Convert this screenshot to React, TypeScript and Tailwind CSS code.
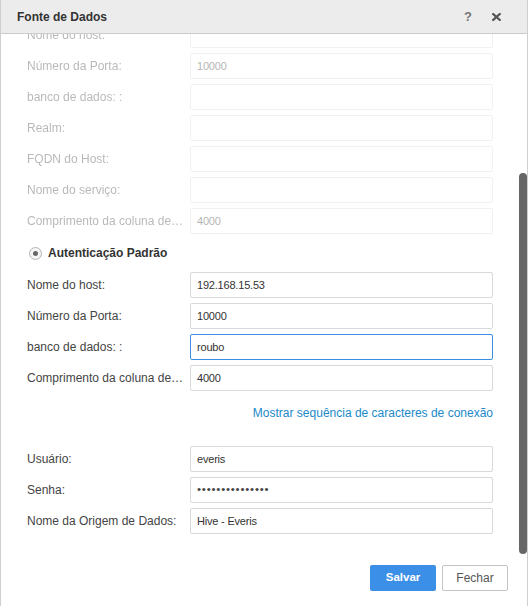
const font = { fontFamily: '"Liberation Sans", Arial, sans-serif' };

type Row = { label: string; value?: string; focused?: boolean; password?: boolean };

const fadedRows: Row[] = [
  { label: 'Nome do host:' },
  { label: 'Número da Porta:', value: '10000' },
  { label: 'banco de dados: :' },
  { label: 'Realm:' },
  { label: 'FQDN do Host:' },
  { label: 'Nome do serviço:' },
  { label: 'Comprimento da coluna de caracteres padrão:', value: '4000' },
];

const defaultRows: Row[] = [
  { label: 'Nome do host:', value: '192.168.15.53' },
  { label: 'Número da Porta:', value: '10000' },
  { label: 'banco de dados: :', value: 'roubo', focused: true },
  { label: 'Comprimento da coluna de caracteres padrão:', value: '4000' },
];

const userRows: Row[] = [
  { label: 'Usuário:', value: 'everis' },
  { label: 'Senha:', value: '•••••••••••••••', password: true },
  { label: 'Nome da Origem de Dados:', value: 'Hive - Everis' },
];

function FieldRow({ row }: { row: Row }) {
  const border = row.focused ? 'border-[#3b8fe3]' : 'border-[#d9d9d9]';
  const text = row.password
    ? 'text-[11.5px] tracking-[0.8px] text-[#444]'
    : 'text-[11px] tracking-[-0.2px] text-[#333]';
  return (
    <div className="flex items-center h-[26px]">
      <div className="w-[157px] mr-[6px] truncate text-[12px] text-[#444]">{row.label}</div>
      <div className={`flex-1 h-[26px] flex items-center pl-[6px] rounded-[2px] border bg-white ${border} ${text}`}>
        {row.value}
      </div>
    </div>
  );
}

export default function App() {
  return (
    <div style={font} className="w-[528px] h-[606px] bg-white border-l border-r border-[#cfcfcf] flex flex-col overflow-hidden">
      {/* header */}
      <div className="h-[34px] shrink-0 bg-[#ececec] border-b border-[#cccccc] flex items-center pl-[16px] pr-[26px]">
        <div className="text-[12px] font-bold text-[#333]">Fonte de Dados</div>
        <div className="ml-auto text-[13px] font-bold text-[#777] mr-[20px]">?</div>
        <svg width="9" height="8" viewBox="0 0 9 8" className="mt-[1px]">
          <path d="M1.2 1 L7.8 7 M7.8 1 L1.2 7" stroke="#555" strokeWidth="2.2" strokeLinecap="square" />
        </svg>
      </div>

      {/* scrolled body */}
      <div className="relative h-[522px] shrink-0 overflow-hidden flex flex-col justify-end">
        <div className="shrink-0 pl-[26px] pr-[34px] pb-[22px]">
          <div className="flex flex-col gap-[5px] opacity-[0.38]">
            {fadedRows.map((r, i) => (
              <FieldRow key={i} row={r} />
            ))}
          </div>

          <div className="mt-[11px] mb-[11px] h-[16px] flex items-center pl-[2px]">
            <div className="w-[13px] h-[13px] rounded-full border border-[#b5b5b5] bg-[#f4f4f4] flex items-center justify-center">
              <div className="w-[5px] h-[5px] rounded-full bg-[#666]" />
            </div>
            <div className="ml-[6px] text-[12px] font-bold text-[#333]">Autenticação Padrão</div>
          </div>

          <div className="flex flex-col gap-[5px]">
            {defaultRows.map((r, i) => (
              <FieldRow key={i} row={r} />
            ))}
          </div>

          <div className="mt-[14px] mb-[25px] h-[16px] flex items-center justify-end text-[12px] text-[#2189c9]">
            Mostrar sequência de caracteres de conexão
          </div>

          <div className="flex flex-col gap-[5px]">
            {userRows.map((r, i) => (
              <FieldRow key={i} row={r} />
            ))}
          </div>
        </div>

        {/* scrollbar thumb */}
        <div className="absolute right-0 top-[139px] w-[8px] h-[381px] rounded-[4px] bg-[#666666]" />
      </div>

      {/* footer */}
      <div className="flex-1 flex justify-end items-start pt-[9px] pr-[19px] gap-[6px]">
        <button className="w-[66px] h-[26px] rounded-[2px] bg-[#3b8fe6] text-white text-[11.5px] font-bold">
          Salvar
        </button>
        <button className="w-[66px] h-[26px] rounded-[2px] bg-white border border-[#c4c4c4] text-[#555] text-[12px]">
          Fechar
        </button>
      </div>
    </div>
  );
}
